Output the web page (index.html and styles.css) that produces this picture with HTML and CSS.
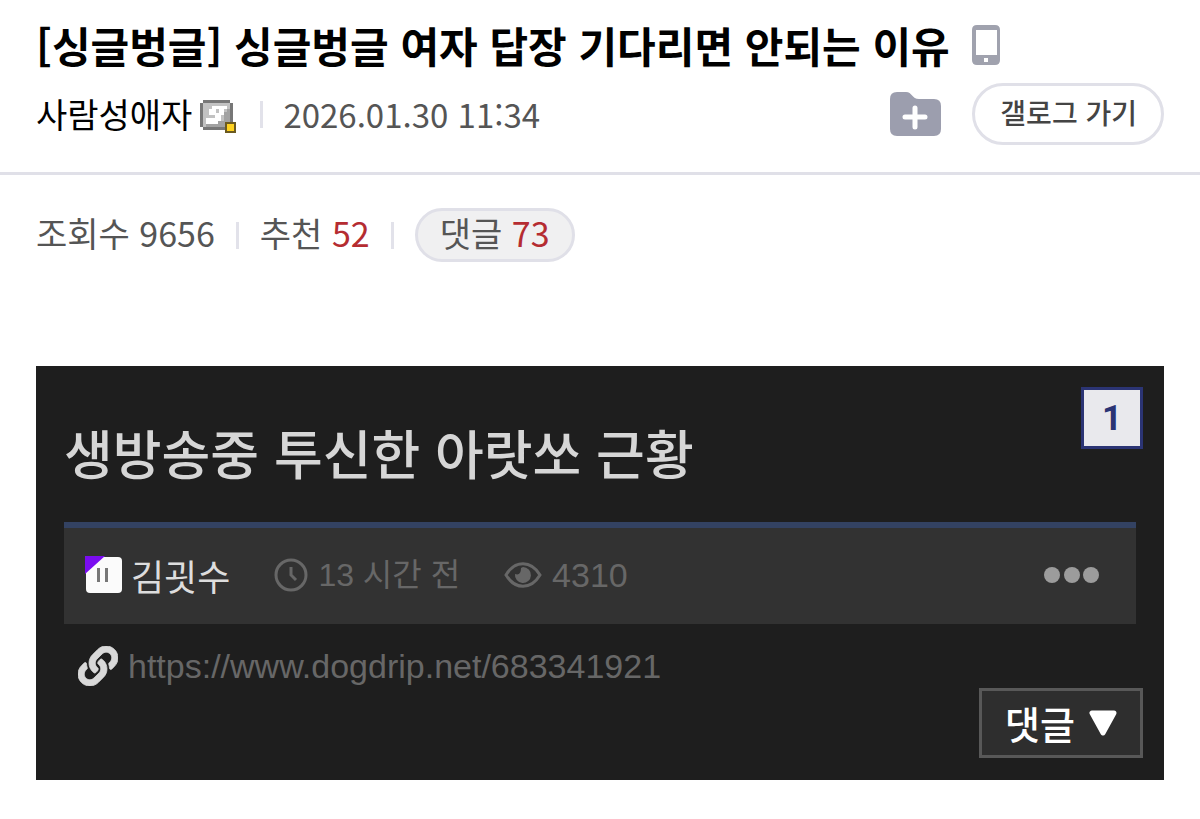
FILE: index.html
```html
<!DOCTYPE html>
<html lang="ko">
<head>
<meta charset="utf-8">
<meta name="viewport" content="width=device-width, initial-scale=1">
<title>싱글벙글 여자 답장 기다리면 안되는 이유</title>
<link rel="stylesheet" href="styles.css">
</head>
<body>
<header class="post-header">
  <div class="title-row">
    <h1 class="title">[싱글벙글] 싱글벙글 여자 답장 기다리면 안되는 이유</h1>
    <svg class="icon-phone" viewBox="0 0 28 40" aria-hidden="true">
      <path fill="#a0a2ae" fill-rule="evenodd" d="M5 0H23Q28 0 28 5V35Q28 40 23 40H5Q0 40 0 35V5Q0 0 5 0ZM4 5V30H25V5ZM12 33V37H16V33Z"/>
    </svg>
  </div>
  <div class="meta-row">
    <span class="author">사람성애자</span>
    <svg class="icon-member" viewBox="0 0 36 33" aria-hidden="true">
      <path fill="#777777" d="M3 0H30V3H33V27H30V30H3V27H0V3H3Z"/>
      <path fill="#c2c2c2" d="M3 3H30V27H3Z"/>
      <path fill="#a2a2a2" d="M27 9H30V27H6V24H18V21H24V12H27Z"/>
      <path fill="#ffffff" fill-rule="evenodd" d="M12 6H27V9H24V15H21V21H18V24H6V18H15V15H9V9H12ZM16 9V13H19V9Z"/>
      <path fill="#6b5a20" d="M25 22H36V33H25Z"/>
      <path fill="#ffd21f" d="M27 24H34V31H27Z"/>
    </svg>
    <span class="divider"></span>
    <time class="date" datetime="2026-01-30T11:34">2026.01.30 11:34</time>
    <div class="actions">
      <button class="folder-button" type="button" aria-label="추가">
        <svg class="icon-folder" viewBox="0 0 51 44" aria-hidden="true">
          <path fill="#9c9eae" d="M7 0H16C22 0 22 7 29 7H44Q51 7 51 14V37Q51 44 44 44H7Q0 44 0 37V7Q0 0 7 0Z"/>
          <path fill="none" stroke="#ffffff" stroke-width="5" stroke-linecap="round" d="M25 16V35M15 25H35"/>
        </svg>
      </button>
      <a class="gallog-link" href="#gallog">갤로그 가기</a>
    </div>
  </div>
</header>
<main class="content">
  <div class="stats">
    <span class="stat">조회수 9656</span>
    <span class="divider"></span>
    <span class="stat">추천 <span class="count">52</span></span>
    <span class="divider"></span>
    <a class="stat comment-pill" href="#comments">댓글 <span class="count">73</span></a>
  </div>
  <article class="card">
    <div class="card-top">
      <h2 class="card-title">생방송중 투신한 아랏쏘 근황</h2>
      <span class="badge">1</span>
    </div>
    <div class="info-bar">
      <svg class="icon-level" viewBox="0 0 38 38" aria-hidden="true">
        <rect x="1" y="1" width="36" height="36" rx="4" fill="#fbfbfb"/>
        <path fill="#7a0cf0" d="M0 0H20L0 18Z"/>
        <path fill="#777777" d="M12 12H15V26H12ZM20 12H23V26H20Z"/>
      </svg>
      <span class="nickname">김굇수</span>
      <span class="info info-time">
        <svg class="icon-clock" viewBox="0 0 34 34" aria-hidden="true">
          <circle cx="17" cy="17" r="15" fill="none" stroke="#676767" stroke-width="3"/>
          <path d="M17 9V17L22 22" fill="none" stroke="#676767" stroke-width="3"/>
        </svg>
        13 시간 전
      </span>
      <span class="info info-views">
        <svg class="icon-eye" viewBox="0 0 38 26" aria-hidden="true">
          <path d="M2 13C11 -2 27 -2 36 13C27 28 11 28 2 13Z" fill="none" stroke="#676767" stroke-width="3"/>
          <path d="M19 5A8 8 0 1 1 11 12Q17 14 17 6Z" fill="#676767"/>
        </svg>
        4310
      </span>
      <button class="more" type="button" aria-label="더보기">
        <svg class="icon-dots" viewBox="0 0 56 16" aria-hidden="true">
          <circle cx="8" cy="8" r="8"/><circle cx="28" cy="8" r="8"/><circle cx="47" cy="8" r="8"/>
        </svg>
      </button>
    </div>
    <div class="link-row">
      <svg class="icon-link" viewBox="0 0 512 512" aria-hidden="true">
        <path fill="#d9d9d9" stroke="#d9d9d9" stroke-width="10" d="M326.612 185.391c59.747 59.809 58.927 155.698.36 214.59-.11.12-.24.25-.36.37l-67.2 67.2c-59.27 59.27-155.699 59.262-214.96 0-59.27-59.26-59.27-155.7 0-214.96l37.106-37.106c9.84-9.84 26.786-3.3 27.294 10.606.648 17.722 3.826 35.527 9.69 52.721 1.986 5.822.567 12.262-3.783 16.612l-13.087 13.087c-28.026 28.026-28.905 73.66-1.155 101.96 28.024 28.579 74.086 28.749 102.325.51l67.2-67.19c28.191-28.191 28.073-73.757 0-101.83-3.701-3.694-7.429-6.564-10.341-8.569a16.037 16.037 0 0 1-6.947-12.606c-.396-10.567 3.348-21.456 11.698-29.806l21.054-21.055c5.521-5.521 14.182-6.199 20.584-1.731a152.482 152.482 0 0 1 20.522 17.197zM467.547 44.449c-59.261-59.262-155.69-59.27-214.96 0l-67.2 67.2c-.12.12-.25.25-.36.37-58.566 58.892-59.387 154.781.36 214.59a152.454 152.454 0 0 0 20.521 17.196c6.402 4.468 15.064 3.789 20.584-1.731l21.054-21.055c8.35-8.35 12.094-19.239 11.698-29.806a16.037 16.037 0 0 0-6.947-12.606c-2.912-2.005-6.64-4.875-10.341-8.569-28.073-28.073-28.191-73.639 0-101.83l67.2-67.19c28.239-28.239 74.3-28.069 102.325.51 27.75 28.3 26.872 73.934-1.155 101.96l-13.087 13.087c-4.35 4.35-5.769 10.79-3.783 16.612 5.864 17.194 9.042 34.999 9.69 52.721.509 13.906 17.454 20.446 27.294 10.606l37.106-37.106c59.271-59.259 59.271-155.699.001-214.959z"/>
      </svg>
      <a class="source-link" href="https://www.dogdrip.net/683341921">https://www.dogdrip.net/683341921</a>
    </div>
    <div class="card-bottom">
      <button class="comment-button" type="button">댓글
        <svg class="icon-triangle" viewBox="0 0 28 26" aria-hidden="true">
          <path d="M3 3H25L14 23Z" fill="#ffffff" stroke="#ffffff" stroke-width="5" stroke-linejoin="round"/>
        </svg>
      </button>
    </div>
  </article>
</main>
</body>
</html>
```
FILE: styles.css
```css
* {
  box-sizing: border-box;
}

body {
  margin: 0;
  background: #ffffff;
  color: #000000;
  font-family: "Noto Sans CJK KR", sans-serif;
}

svg {
  display: block;
  flex: none;
}

a {
  color: inherit;
  text-decoration: none;
}

button {
  margin: 0;
  padding: 0;
  border: 0;
  background: none;
  font: inherit;
  cursor: pointer;
}

.post-header {
  padding: 15px 36px 27px;
  border-bottom: 3px solid #e0e0e8;
}

.title-row {
  display: flex;
  align-items: center;
  gap: 22px;
}

.title {
  margin: 0;
  font-size: 42px;
  line-height: 60px;
  font-weight: 700;
}

.icon-phone {
  width: 28px;
  height: 40px;
}

.meta-row {
  display: flex;
  align-items: center;
  margin-top: 8px;
  font-size: 34px;
  line-height: 62px;
  font-weight: 400;
}

.icon-member {
  width: 36px;
  height: 33px;
  margin: 4px 0 0 8px;
}

.divider {
  width: 3px;
  height: 27px;
  background: #e2e2ea;
}

.meta-row .divider {
  margin: 0 20px 0 24px;
}

.date {
  color: #555555;
  font-size: 33px;
}

.actions {
  display: flex;
  align-items: center;
  gap: 31px;
  margin-left: auto;
}

.icon-folder {
  width: 51px;
  height: 44px;
}

.gallog-link {
  padding: 0 24px 4px 25px;
  border: 3px solid #e0e0e8;
  border-radius: 31px;
  color: #444444;
  font-size: 28px;
  line-height: 52px;
  font-weight: 500;
}

.content {
  padding: 33px 36px 39px;
}

.stats {
  display: flex;
  align-items: center;
  gap: 21px;
  color: #555555;
  font-size: 34px;
  line-height: 44px;
  font-weight: 400;
}

.stat {
  padding-bottom: 4px;
}

.count {
  color: #b52c31;
}

.comment-pill {
  padding: 0 22px 4px;
  border: 3px solid #e0e0e8;
  border-radius: 27px;
  background: #f0f0f1;
}

.card {
  margin-top: 104px;
  padding: 21px 0;
  background: #1e1e1e;
}

.card-top {
  display: flex;
  align-items: flex-start;
  justify-content: space-between;
  padding: 0 21px 0 28px;
}

.card-title {
  margin: 26px 0 31px;
  color: #d6d6d6;
  font-size: 53px;
  line-height: 78px;
  font-weight: 500;
}

.badge {
  width: 62px;
  padding-top: 2px;
  border: 3px solid #2b3474;
  background: #e9e9ed;
  color: #2b3474;
  font-family: Roboto, "Liberation Sans", sans-serif;
  font-size: 35px;
  line-height: 54px;
  font-weight: 700;
  text-align: center;
}

.info-bar {
  display: flex;
  align-items: center;
  margin: 0 28px;
  padding: 0 36px 2px 21px;
  border-top: 6px solid #334262;
  background: #323232;
  line-height: 94px;
}

.icon-level {
  width: 38px;
  height: 38px;
}

.nickname {
  margin-left: 8px;
  color: #dddddd;
  font-size: 36px;
  font-weight: 400;
}

.info {
  display: flex;
  align-items: center;
  gap: 10px;
  color: #676767;
  font-family: "Liberation Sans", "Noto Sans CJK KR", sans-serif;
  font-size: 34px;
  font-weight: 400;
}

.info-time,
.info-views {
  margin-left: 44px;
}

.info-time {
  font-size: 32px;
}

.icon-clock {
  width: 34px;
  height: 34px;
}

.icon-eye {
  width: 38px;
  height: 26px;
}

.more {
  margin-left: auto;
}

.icon-dots {
  width: 56px;
  height: 16px;
  fill: #9c9c9c;
}

.link-row {
  display: flex;
  align-items: center;
  gap: 10px;
  padding: 20px 42px 0;
}

.icon-link {
  width: 40px;
  height: 40px;
}

.source-link {
  color: #676767;
  font-family: "Liberation Sans", sans-serif;
  font-size: 34px;
  line-height: 44px;
}

.card-bottom {
  display: flex;
  justify-content: flex-end;
  padding: 0 21px 1px;
}

.comment-button {
  display: flex;
  align-items: center;
  gap: 14px;
  padding: 0 23px;
  border: 3px solid #585858;
  background: #2e2e2e;
  color: #ffffff;
  font-size: 38px;
  line-height: 64px;
  font-weight: 500;
}

.icon-triangle {
  width: 28px;
  height: 26px;
}
```
